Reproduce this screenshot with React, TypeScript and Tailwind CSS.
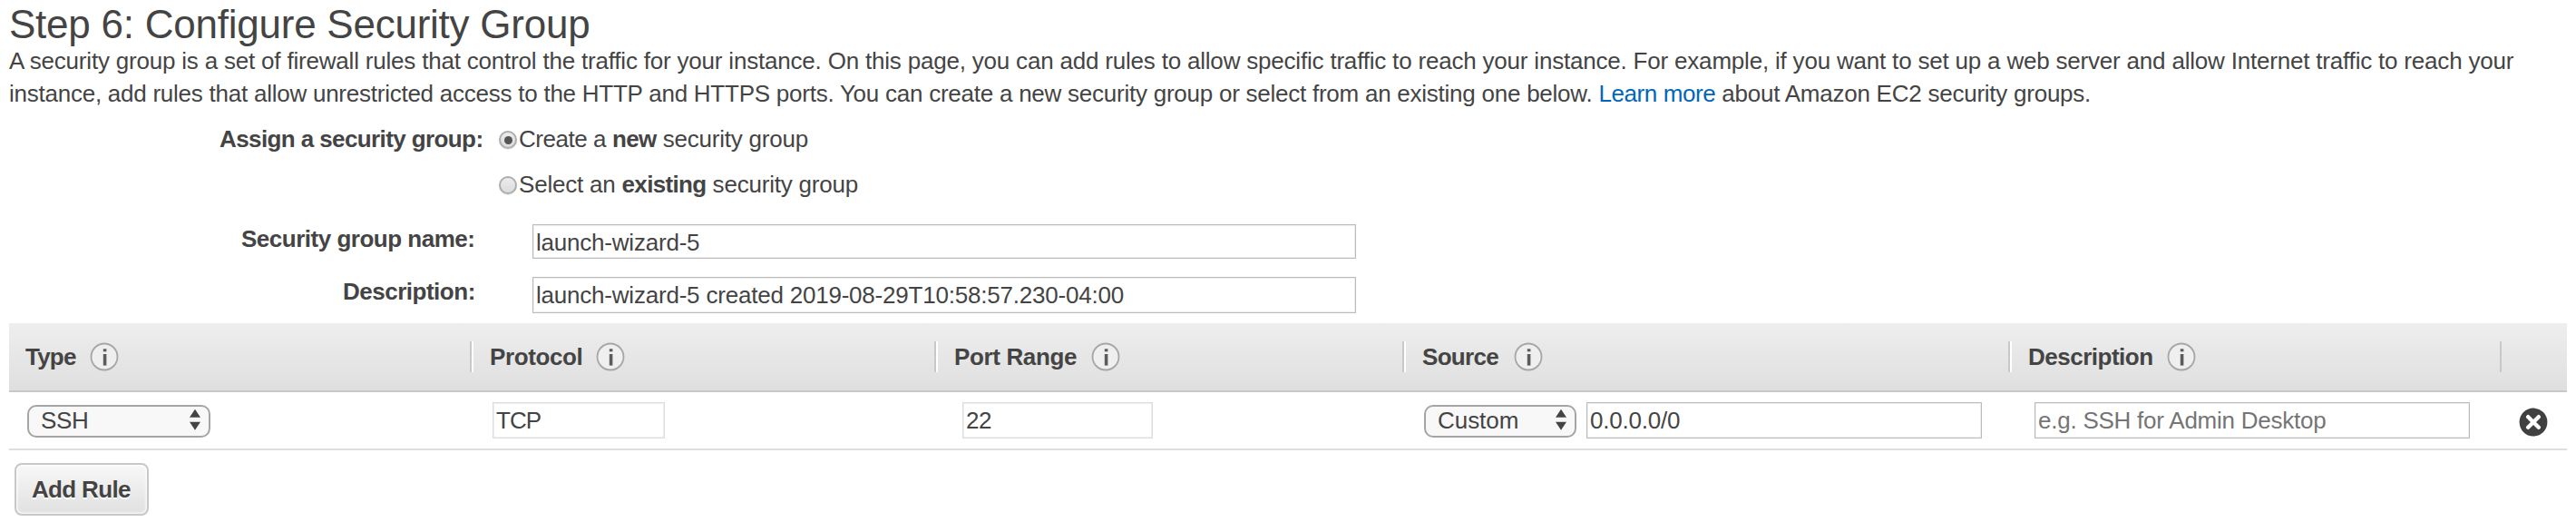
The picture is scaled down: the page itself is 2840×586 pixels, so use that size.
import React from "react";

function InfoIcon() {
  return (
    <svg className="size-8 shrink-0" viewBox="0 0 32 32">
      <circle cx="16" cy="16" r="14.5" fill="#efefef" stroke="#a6a6a6" strokeWidth="1.8" />
      <rect x="14.8" y="7.3" width="3.6" height="3" fill="#5c5c5c" />
      <rect x="14.8" y="13" width="3.6" height="12.6" fill="#5c5c5c" />
    </svg>
  );
}

function RemoveIcon() {
  return (
    <svg className="size-8 shrink-0" viewBox="0 0 32 32">
      <circle cx="16" cy="16" r="15.4" fill="#404040" />
      <path d="M10.2 10.2 21.8 21.8M21.8 10.2 10.2 21.8" stroke="#fff" strokeWidth="4.4" strokeLinecap="round" />
    </svg>
  );
}

function Radio({ checked = false }: { checked?: boolean }) {
  return (
    <span className="mt-[9px] mr-0.5 flex size-5 shrink-0 items-center justify-center rounded-full border-2 border-[#adadad] bg-linear-to-b from-[#ececec] to-[#dcdcdc] shadow-[0_1px_1px_#e4e4e4]">
      {checked && <span className="size-[9px] rounded-full bg-[#555]" />}
    </span>
  );
}

function Field({
  className,
  value,
  placeholder,
}: {
  className: string;
  value?: string;
  placeholder?: string;
}) {
  return (
    <input
      type="text"
      defaultValue={value}
      placeholder={placeholder}
      className={`block shrink-0 border bg-white py-0 pr-0 pl-[3px] shadow-[inset_0_0_0_1px_#eeeeee] outline-none placeholder:text-[#757575] ${className}`}
    />
  );
}

function Select({ label, className }: { label: string; className: string }) {
  return (
    <div
      className={`mt-0.5 flex h-9 shrink-0 items-start justify-between rounded-[10px] border-2 border-[#a5a5a5] bg-[#f8f8f8] pr-[9px] pl-[13px] leading-[30px] ${className}`}
    >
      <span>{label}</span>
      <svg className="mt-0.5 h-6 w-3" viewBox="0 0 12 24" fill="#444">
        <path d="M6 .7 12 9.7H0ZM0 14.7H12L6 23.7Z" />
      </svg>
    </div>
  );
}

function HeaderCell({ label, cell, text }: { label: string; cell: string; text: string }) {
  return (
    <div className={`flex shrink-0 items-center ${cell}`}>
      <span className={`shrink-0 ${text}`}>{label}</span>
      <InfoIcon />
    </div>
  );
}

function Separator() {
  return <div className="h-[34px] w-1 shrink-0 border-r-2 border-l-2 border-r-white border-l-[#c8c8c8]" />;
}

export default function App() {
  return (
    <div className="h-[586px] w-[2840px] overflow-hidden bg-white px-2.5 pt-0.5 font-['Liberation_Sans',Arial,sans-serif] text-[26px] leading-9 tracking-[-0.21px] whitespace-nowrap text-[#444]">
      <h1 className="h-[47px] text-[44px] leading-[49px] tracking-[-0.24px]">Step 6: Configure Security Group</h1>
      <p className="tracking-[-0.198px]">
        A security group is a set of firewall rules that control the traffic for your instance. On this page, you can
        add rules to allow specific traffic to reach your instance. For example, if you want to set up a web server and
        allow Internet traffic to reach your
        <br />
        <span className="tracking-[-0.245px]">
          instance, add rules that allow unrestricted access to the HTTP and HTTPS ports. You can create a new security
          group or select from an existing one below. <a className="tracking-[-0.4px] text-[#0066bb]">Learn more</a>{" "}
          about Amazon EC2 security groups.
        </span>
      </p>

      <div className="flex h-16 pt-3.5">
        <div className="w-[540px] shrink-0 pl-[232px] font-bold tracking-[-0.6px]">Assign a security group:</div>
        <Radio checked />
        <span>
          <span className="tracking-[-0.45px]">Create a </span>
          <b className="tracking-[-0.6px]">new</b> security group
        </span>
      </div>
      <div className="flex h-[60px]">
        <div className="w-[540px] shrink-0" />
        <Radio />
        <span>
          Select an <b className="tracking-[-0.65px]">existing</b> security group
        </span>
      </div>
      <div className="flex h-[58px]">
        <div className="w-[577px] shrink-0 pl-[256px] font-bold tracking-[-0.49px]">Security group name:</div>
        <Field className="mt-0.5 h-[38px] w-[908px] border-[#bbb] pt-0.5" value="launch-wizard-5" />
      </div>
      <div className="flex h-[53px]">
        <div className="w-[577px] shrink-0 pl-[368px] font-bold tracking-[-0.49px]">Description:</div>
        <Field
          className="mt-0.5 h-10 w-[908px] border-[#bbb]"
          value="launch-wizard-5 created 2019-08-29T10:58:57.230-04:00"
        />
      </div>

      <div className="flex h-[76px] items-center border-b-2 border-[#c8c8c8] bg-linear-to-b from-[#eeeeee] to-[#dfdfdf] font-bold">
        <HeaderCell label="Type" cell="w-[508px] pl-[18px]" text="w-[71px] tracking-[-0.8px]" />
        <Separator />
        <HeaderCell label="Protocol" cell="w-[508px] pl-[18px]" text="w-[117px] tracking-[-0.4px]" />
        <Separator />
        <HeaderCell label="Port Range" cell="w-[512px] pl-[18px]" text="w-[151px] tracking-[-0.36px]" />
        <Separator />
        <HeaderCell label="Source" cell="w-[664px] pl-[18px]" text="w-[101px] tracking-[-0.7px]" />
        <Separator />
        <HeaderCell label="Description" cell="w-[538px] pl-[18px]" text="w-[153px] tracking-[-0.5px]" />
        <div className="h-[34px] w-0.5 bg-[#c8c8c8]" />
      </div>

      <div className="flex h-16 items-center border-b-2 border-[#dedede]">
        <div className="w-[533px] shrink-0 pl-5">
          <Select label="SSH" className="w-[202px] tracking-[-0.4px]" />
        </div>
        <div className="w-[518px] shrink-0">
          <Field className="h-10 w-[190px] border-[#ddd] tracking-[-0.9px]" value="TCP" />
        </div>
        <div className="w-[509px] shrink-0">
          <Field className="h-10 w-[210px] border-[#ddd] tracking-[-0.5px]" value="22" />
        </div>
        <div className="flex w-[673px] shrink-0 items-center gap-[11px]">
          <Select label="Custom" className="w-[168px] tracking-[-0.05px]" />
          <Field className="h-10 w-[436px] border-[#bbb]" value="0.0.0.0/0" />
        </div>
        <div className="w-[534px] shrink-0">
          <Field
            className="h-10 w-[480px] border-[#bbb] tracking-[-0.24px]"
            placeholder="e.g. SSH for Admin Desktop"
          />
        </div>
        <button className="mt-1" aria-label="Remove rule">
          <RemoveIcon />
        </button>
      </div>

      <button className="mt-3.5 ml-1.5 block h-[58px] w-[148px] rounded-lg border-2 border-[#c8c8c8] bg-linear-to-b from-[#f8f8f8] to-[#e0e0e0] pl-[17px] text-left leading-[54px] font-bold tracking-[-0.66px] shadow-[inset_0_0_3px_1px_#ffffff] [text-shadow:0_2px_0_#ffffff]">
        Add Rule
      </button>
    </div>
  );
}
